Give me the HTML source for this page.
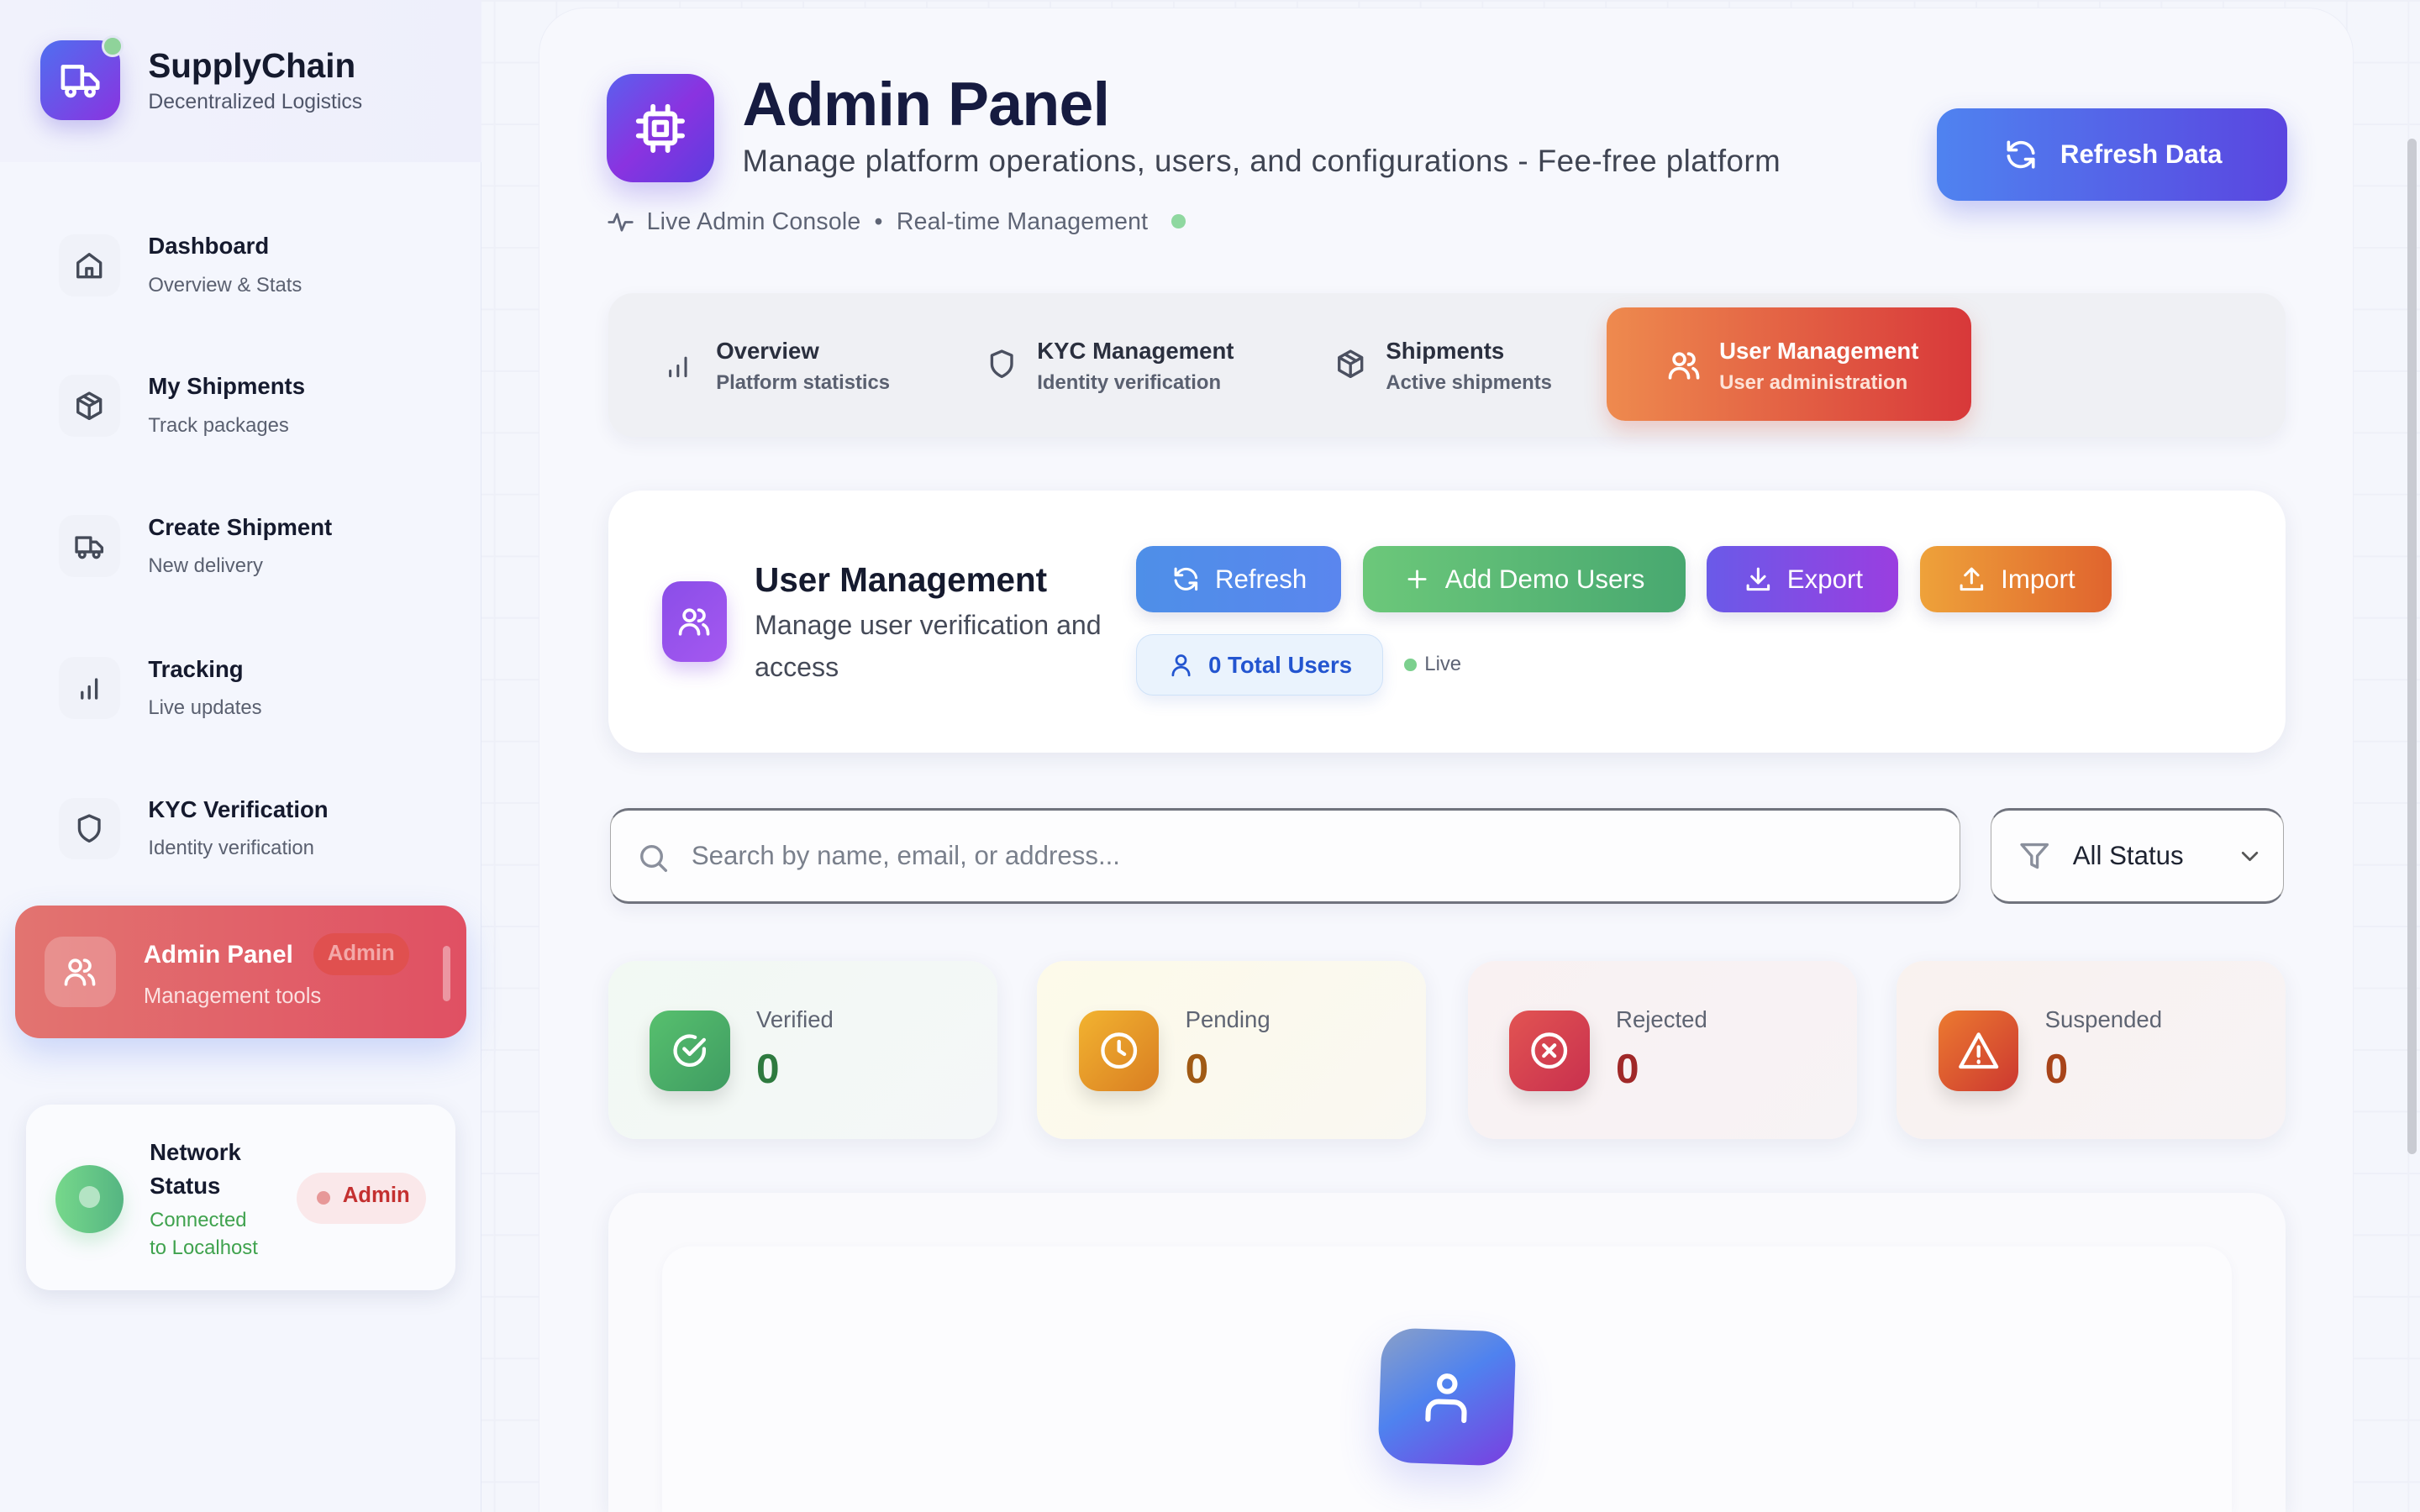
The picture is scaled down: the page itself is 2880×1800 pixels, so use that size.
<!DOCTYPE html>
<html><head><meta charset="utf-8"><style>
*{box-sizing:border-box;margin:0;padding:0}
html,body{width:2880px;height:1800px;overflow:hidden}
body{font-family:"Liberation Sans",sans-serif;background:#f3f5fc}
#root{zoom:1.836735;width:1568px;height:980px;position:relative;overflow:hidden;background:#f4f6fc;
background-image:linear-gradient(#eef0f8 1px,transparent 1px),linear-gradient(90deg,#eef0f8 1px,transparent 1px);background-size:40px 40px}
.a{position:absolute}
.side{left:0;top:0;width:312px;height:980px;background:#f4f6fd;border-right:1px solid #e3e7f5}
.sh{left:0;top:0;width:312px;height:105px;background:linear-gradient(90deg,#f1f2fc,#eeeffb)}
svg{display:block}
.ic{stroke:currentColor;fill:none;stroke-width:2;stroke-linecap:round;stroke-linejoin:round}
.nav .t{font-size:15px;font-weight:700;color:#151a2e}
.nav .s{font-size:13px;color:#5a6070;margin-top:9px}
.nb{width:40px;height:40px;border-radius:10px;background:#f0f2f9;color:#444a58;display:flex;align-items:center;justify-content:center}
.main{left:349px;top:5px;width:1176px;height:975px;background:#f7f8fd;border-radius:30px 30px 0 0;border:1px solid #eceef7;border-bottom:none}
.card{background:#fff;border-radius:22px;box-shadow:0 4px 14px rgba(30,40,90,.08)}
.btn{height:43px;border-radius:11px;color:#fff;font-size:17px;display:flex;align-items:center;justify-content:center;gap:9px;box-shadow:0 4px 10px rgba(60,60,120,.15)}
.stat{width:252px;height:115px;top:623px;border-radius:18px;box-shadow:0 4px 14px rgba(30,40,90,.07)}
.stat .i{position:absolute;left:27px;top:32px;width:52px;height:52px;border-radius:13px;display:flex;align-items:center;justify-content:center;color:#fff;box-shadow:0 6px 12px rgba(0,0,0,.12)}
.stat .l{position:absolute;left:96px;top:29px;font-size:15px;color:#5e6472}
.stat .n{position:absolute;left:96px;top:54px;font-size:27px;font-weight:700}
.tab .t{font-size:15px;font-weight:700;color:#2a2f3e}
.tab .s{font-size:13px;font-weight:700;color:#5a6070;margin-top:4px}
</style></head><body><div id="root">

<div class="a side"></div>
<div class="a sh"></div>
<div class="a" style="left:26px;top:26px;width:52px;height:52px;border-radius:14px;background:linear-gradient(135deg,#4f6ff0,#8a33e0);box-shadow:0 6px 14px rgba(100,80,220,.3);display:flex;align-items:center;justify-content:center;color:#fff">
<svg width="30" height="30" viewBox="0 0 24 24" class="ic"><path d="M3 5h10v11H3zM13 9h4l4 4v3h-8z"/><circle cx="7" cy="18" r="2"/><circle cx="17" cy="18" r="2"/></svg></div>
<div class="a" style="left:66px;top:23px;width:14px;height:14px;border-radius:50%;background:#8fd39a;border:2px solid #e3e6f5"></div>
<div class="a" style="left:96px;top:30px;font-size:22px;font-weight:700;color:#151a2e">SupplyChain</div>
<div class="a" style="left:96px;top:59px;font-size:13.5px;color:#50566a">Decentralized Logistics</div>

<div class="a nav" style="left:38px;top:152px"><div class="nb"><svg width="22" height="22" viewBox="0 0 24 24" class="ic"><path d="M4 10l8-6 8 6v10H4zM10 20v-6h4v6"/></svg></div></div>
<div class="a nav" style="left:96px;top:151px"><div class="t">Dashboard</div><div class="s">Overview &amp; Stats</div></div>
<div class="a nav" style="left:38px;top:243px"><div class="nb"><svg width="22" height="22" viewBox="0 0 24 24" class="ic"><path d="M12 3l8 4.5v9L12 21l-8-4.5v-9zM4 7.5l8 4.5 8-4.5M12 12v9M8 5.2l8 4.6"/></svg></div></div>
<div class="a nav" style="left:96px;top:242px"><div class="t">My Shipments</div><div class="s">Track packages</div></div>
<div class="a nav" style="left:38px;top:334px"><div class="nb"><svg width="22" height="22" viewBox="0 0 24 24" class="ic"><path d="M3 6h10v10H3zM13 9h4l4 4v3h-8z"/><circle cx="7" cy="18" r="2"/><circle cx="17" cy="18" r="2"/></svg></div></div>
<div class="a nav" style="left:96px;top:333px"><div class="t">Create Shipment</div><div class="s">New delivery</div></div>
<div class="a nav" style="left:38px;top:426px"><div class="nb"><svg width="22" height="22" viewBox="0 0 24 24" class="ic"><path d="M7 19v-4M12 19v-8M17 19V6"/></svg></div></div>
<div class="a nav" style="left:96px;top:425px"><div class="t">Tracking</div><div class="s">Live updates</div></div>
<div class="a nav" style="left:38px;top:517px"><div class="nb"><svg width="22" height="22" viewBox="0 0 24 24" class="ic"><path d="M12 3l7 3v6c0 4-3 7-7 9-4-2-7-5-7-9V6z"/></svg></div></div>
<div class="a nav" style="left:96px;top:516px"><div class="t">KYC Verification</div><div class="s">Identity verification</div></div>

<div class="a" style="left:10px;top:587px;width:292px;height:86px;border-radius:16px;background:linear-gradient(90deg,#e27470,#e05063);box-shadow:0 10px 22px rgba(110,140,240,.3)"></div>
<div class="a" style="left:29px;top:607px;width:46px;height:46px;border-radius:12px;background:rgba(255,255,255,.22);display:flex;align-items:center;justify-content:center;color:#fff"><svg width="24" height="24" viewBox="0 0 24 24" class="ic"><circle cx="9" cy="8" r="3.5"/><path d="M3 20c0-4 3-6 6-6s6 2 6 6M15 4.5a3.5 3.5 0 010 7M18 14c2 1 3 3 3 6"/></svg></div>
<div class="a" style="left:93px;top:610px;font-size:16px;font-weight:700;color:#fff">Admin Panel</div>
<div class="a" style="left:203px;top:605px;width:62px;height:27px;border-radius:14px;background:#e0504f;color:#f3a8a8;font-size:14px;font-weight:700;text-align:center;line-height:27px">Admin</div>
<div class="a" style="left:93px;top:638px;font-size:14px;color:#fbe0e0">Management tools</div>
<div class="a" style="left:287px;top:613px;width:5px;height:36px;border-radius:3px;background:rgba(255,255,255,.4)"></div>

<div class="a" style="left:17px;top:716px;width:278px;height:120px;border-radius:16px;background:#fafbfe;box-shadow:0 4px 14px rgba(30,40,90,.1)"></div>
<div class="a" style="left:36px;top:755px;width:44px;height:44px;border-radius:50%;background:linear-gradient(90deg,#76d88b,#55b582);box-shadow:0 6px 12px rgba(90,200,120,.25)"></div>
<div class="a" style="left:51px;top:769px;width:14px;height:14px;border-radius:50%;background:#b4e4c4"></div>
<div class="a" style="left:97px;top:736px;font-size:15px;font-weight:700;color:#151a2e;line-height:22px">Network<br>Status</div>
<div class="a" style="left:97px;top:782px;font-size:13px;color:#3fa24e;line-height:18px">Connected<br>to Localhost</div>
<div class="a" style="left:192px;top:760px;width:84px;height:33px;border-radius:17px;background:#fae8ea"></div>
<div class="a" style="left:205px;top:772px;width:9px;height:9px;border-radius:50%;background:#e79898"></div>
<div class="a" style="left:222px;top:767px;font-size:14px;font-weight:700;color:#c43030">Admin</div>

<div class="a main"></div>
<div class="a" style="left:1560px;top:90px;width:6px;height:658px;border-radius:3px;background:#c9cbd2"></div>

<div class="a" style="left:393px;top:48px;width:70px;height:70px;border-radius:17px;background:linear-gradient(135deg,#5a60ee,#8a33e0 50%,#5b3de0);box-shadow:0 8px 18px rgba(110,80,230,.3);display:flex;align-items:center;justify-content:center;color:#fff">
<svg width="38" height="38" viewBox="0 0 24 24" class="ic"><rect x="6" y="6" width="12" height="12" rx="1.5"/><rect x="9.5" y="9.5" width="5" height="5"/><path d="M9 3v3M15 3v3M9 18v3M15 18v3M3 9h3M3 15h3M18 9h3M18 15h3"/></svg></div>
<div class="a" style="left:481px;top:44px;font-size:40px;font-weight:700;color:#161b40;letter-spacing:-0.4px">Admin Panel</div>
<div class="a" style="left:481px;top:93px;font-size:20px;color:#3f4452;letter-spacing:0.25px">Manage platform operations, users, and configurations - Fee-free platform</div>
<div class="a" style="left:393px;top:135px;color:#60667a"><svg width="18" height="18" viewBox="0 0 24 24" class="ic"><path d="M2 12h4l3-7 4 14 3-7h6"/></svg></div>
<div class="a" style="left:419px;top:135px;font-size:15.5px;color:#5e6475;letter-spacing:0.1px">Live Admin Console &nbsp;•&nbsp; Real-time Management</div>
<div class="a" style="left:759px;top:139px;width:9px;height:9px;border-radius:50%;background:#8fd8a0"></div>

<div class="a btn" style="left:1255px;top:70px;width:227px;height:60px;border-radius:14px;background:linear-gradient(90deg,#4f83f0,#5a45e0);font-size:17px;font-weight:700;box-shadow:0 8px 18px rgba(80,90,230,.3)"><svg width="24" height="24" viewBox="0 0 24 24" class="ic"><path d="M20 11a8 8 0 00-14-4L4 9M4 4v5h5M4 13a8 8 0 0014 4l2-2M20 20v-5h-5"/></svg>&nbsp;Refresh Data</div>

<div class="a" style="left:394px;top:190px;width:1087px;height:93px;border-radius:16px;background:#eff0f4;box-shadow:0 4px 12px rgba(30,40,90,.06)"></div>
<div class="a" style="left:430px;top:227px;color:#4b5060"><svg width="20" height="20" viewBox="0 0 24 24" class="ic"><path d="M5 20v-4M11 20v-8M17 20V6"/></svg></div>
<div class="a tab" style="left:464px;top:219px"><div class="t">Overview</div><div class="s">Platform statistics</div></div>
<div class="a" style="left:638px;top:225px;color:#4b5060"><svg width="22" height="22" viewBox="0 0 24 24" class="ic"><path d="M12 3l7 3v6c0 4-3 7-7 9-4-2-7-5-7-9V6z"/></svg></div>
<div class="a tab" style="left:672px;top:219px"><div class="t">KYC Management</div><div class="s">Identity verification</div></div>
<div class="a" style="left:864px;top:225px;color:#4b5060"><svg width="22" height="22" viewBox="0 0 24 24" class="ic"><path d="M12 3l8 4.5v9L12 21l-8-4.5v-9zM4 7.5l8 4.5 8-4.5M12 12v9M8 5.2l8 4.6"/></svg></div>
<div class="a tab" style="left:898px;top:219px"><div class="t">Shipments</div><div class="s">Active shipments</div></div>
<div class="a" style="left:1041px;top:199px;width:236px;height:74px;border-radius:12px;background:linear-gradient(90deg,#ee8a4e,#d8383a);box-shadow:0 6px 14px rgba(220,80,60,.25)"></div>
<div class="a" style="left:1079px;top:225px;color:#fff"><svg width="24" height="24" viewBox="0 0 24 24" class="ic"><circle cx="9" cy="8" r="3.5"/><path d="M3 20c0-4 3-6 6-6s6 2 6 6M15 4.5a3.5 3.5 0 010 7M18 14c2 1 3 3 3 6"/></svg></div>
<div class="a tab" style="left:1114px;top:219px"><div class="t" style="color:#fff">User Management</div><div class="s" style="color:#fde3d8">User administration</div></div>

<div class="a card" style="left:394px;top:318px;width:1087px;height:170px"></div>
<div class="a" style="left:429px;top:377px;width:42px;height:52px;border-radius:12px;background:linear-gradient(135deg,#8a4ee8,#a558f0);box-shadow:0 6px 12px rgba(140,80,230,.3);display:flex;align-items:center;justify-content:center;color:#fff"><svg width="24" height="24" viewBox="0 0 24 24" class="ic"><circle cx="9" cy="8" r="3.5"/><path d="M3 20c0-4 3-6 6-6s6 2 6 6M15 4.5a3.5 3.5 0 010 7M18 14c2 1 3 3 3 6"/></svg></div>
<div class="a" style="left:489px;top:363px;font-size:22px;font-weight:700;color:#151a2e">User Management</div>
<div class="a" style="left:489px;top:392px;font-size:17.5px;color:#454a58;line-height:27px">Manage user verification and<br>access</div>
<div class="a btn" style="left:736px;top:354px;width:133px;background:linear-gradient(90deg,#4e8fe8,#5a86ee)"><svg width="20" height="20" viewBox="0 0 24 24" class="ic"><path d="M20 11a8 8 0 00-14-4L4 9M4 4v5h5M4 13a8 8 0 0014 4l2-2M20 20v-5h-5"/></svg>Refresh</div>
<div class="a btn" style="left:883px;top:354px;width:209px;background:linear-gradient(90deg,#6cc87a,#48a870)"><svg width="18" height="18" viewBox="0 0 24 24" class="ic"><path d="M12 5v14M5 12h14"/></svg>Add Demo Users</div>
<div class="a btn" style="left:1106px;top:354px;width:124px;background:linear-gradient(90deg,#6a5ae8,#9a3ee0)"><svg width="20" height="20" viewBox="0 0 24 24" class="ic"><path d="M12 4v11M7 10l5 5 5-5M4 17v3h16v-3"/></svg>Export</div>
<div class="a btn" style="left:1244px;top:354px;width:124px;background:linear-gradient(90deg,#eea23a,#e0642e)"><svg width="20" height="20" viewBox="0 0 24 24" class="ic"><path d="M12 15V4M7 9l5-5 5 5M4 17v3h16v-3"/></svg>Import</div>
<div class="a" style="left:736px;top:411px;width:160px;height:40px;border-radius:11px;background:#eaf3fd;border:1px solid #cfe2f8;display:flex;align-items:center;justify-content:center;gap:9px;color:#2355d0;font-size:15px;font-weight:700;box-shadow:0 4px 10px rgba(60,100,200,.12)"><svg width="18" height="18" viewBox="0 0 24 24" class="ic"><circle cx="12" cy="8" r="4"/><path d="M5 21c0-4 3-7 7-7s7 3 7 7"/></svg>0 Total Users</div>
<div class="a" style="left:910px;top:427px;width:8px;height:8px;border-radius:50%;background:#7cd08e"></div>
<div class="a" style="left:923px;top:423px;font-size:13px;color:#5e6475">Live</div>

<div class="a" style="left:395px;top:524px;width:875px;height:62px;border-radius:12px;background:#fdfdfe;border-top:2px solid #70737d;border-bottom:2px solid #70737d;border-left:1px solid #aaa;border-right:1px solid #aaa;box-shadow:0 4px 12px rgba(30,40,90,.06)"></div>
<div class="a" style="left:412px;top:545px;color:#8a8f9c"><svg width="22" height="22" viewBox="0 0 24 24" class="ic"><circle cx="11" cy="11" r="7"/><path d="M16 16l5 5"/></svg></div>
<div class="a" style="left:448px;top:545px;font-size:17px;color:#7a808c">Search by name, email, or address...</div>
<div class="a" style="left:1290px;top:524px;width:190px;height:62px;border-radius:12px;background:#fdfdfe;border-top:2px solid #70737d;border-bottom:2px solid #70737d;border-left:1px solid #aaa;border-right:1px solid #aaa"></div>
<div class="a" style="left:1307px;top:543px;color:#8a8f9c"><svg width="22" height="24" viewBox="0 0 24 24" class="ic"><path d="M3 4h18l-7 8v8l-4-2v-6z"/></svg></div>
<div class="a" style="left:1343px;top:545px;font-size:17px;color:#1d2230">All Status</div>
<div class="a" style="left:1449px;top:546px;color:#555"><svg width="18" height="18" viewBox="0 0 24 24" class="ic"><path d="M6 9l6 6 6-6"/></svg></div>

<div class="a stat" style="left:394px;background:linear-gradient(135deg,#f2f9f3,#f4f7f8)"><div class="i" style="background:linear-gradient(135deg,#57c06e,#3f9c62)"><svg width="28" height="28" viewBox="0 0 24 24" class="ic"><path d="M20 11v1a8 8 0 11-5-7.4"/><path d="M9 11l3 3 8-8"/></svg></div><div class="l">Verified</div><div class="n" style="color:#2e7a3f">0</div></div>
<div class="a stat" style="left:672px;background:linear-gradient(135deg,#fdfae9,#f9f8f2)"><div class="i" style="background:linear-gradient(135deg,#f2b330,#d97e22)"><svg width="28" height="28" viewBox="0 0 24 24" class="ic"><circle cx="12" cy="12" r="9"/><path d="M12 7v5l3 2"/></svg></div><div class="l">Pending</div><div class="n" style="color:#a05a14">0</div></div>
<div class="a stat" style="left:951px;background:linear-gradient(135deg,#f9f1f2,#f7f3f5)"><div class="i" style="background:linear-gradient(135deg,#e25452,#c8304e)"><svg width="28" height="28" viewBox="0 0 24 24" class="ic"><circle cx="12" cy="12" r="9"/><path d="M9 9l6 6M15 9l-6 6"/></svg></div><div class="l">Rejected</div><div class="n" style="color:#a02828">0</div></div>
<div class="a stat" style="left:1229px;background:linear-gradient(135deg,#f9f2ef,#f7f3f5)"><div class="i" style="background:linear-gradient(135deg,#ec7a30,#cc3830)"><svg width="28" height="28" viewBox="0 0 24 24" class="ic"><path d="M12 3l10 18H2z"/><path d="M12 10v5M12 18v.5"/></svg></div><div class="l">Suspended</div><div class="n" style="color:#a8441a">0</div></div>

<div class="a card" style="left:394px;top:773px;width:1087px;height:207px;background:#fafafd;border-radius:22px 22px 0 0"></div>
<div class="a" style="left:429px;top:808px;width:1017px;height:172px;border-radius:18px 18px 0 0;background:#fcfcfe;box-shadow:0 2px 8px rgba(30,40,90,.04)"></div>
<div class="a" style="left:894px;top:862px;width:87px;height:87px;border-radius:22px;background:linear-gradient(145deg,#8aa0c8,#4f82ef 45%,#7a3ee0);transform:rotate(2deg);box-shadow:0 12px 26px rgba(90,100,230,.2);display:flex;align-items:center;justify-content:center;color:#fff"><svg width="40" height="40" viewBox="0 0 24 24" class="ic"><circle cx="12" cy="7" r="3"/><path d="M5 21v-3a4 4 0 014-4h6a4 4 0 014 4v3"/></svg></div>

</div></body></html>
